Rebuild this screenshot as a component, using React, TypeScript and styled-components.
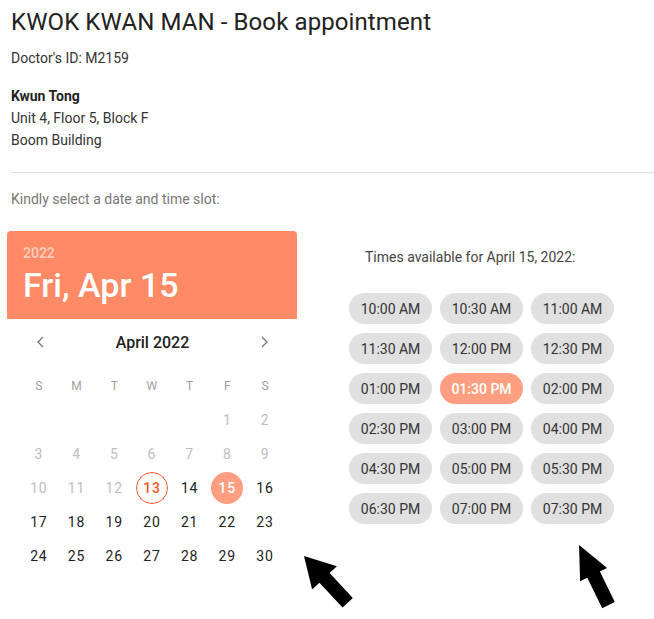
import React, { useState } from 'react';
import styled, { createGlobalStyle } from 'styled-components';

const accent = '#ff8a65';
const accentLight = '#ff9e80';
const accentDark = '#ff5722';

const GlobalStyle = createGlobalStyle`
  html, body {
    margin: 0;
    padding: 0;
    background: #fff;
    font-family: Roboto, "Liberation Sans", Arial, sans-serif;
    color: #333;
  }
`;

const weekdays = ['S', 'M', 'T', 'W', 'T', 'F', 'S'];
const slots = [
  '10:00 AM', '10:30 AM', '11:00 AM',
  '11:30 AM', '12:00 PM', '12:30 PM',
  '01:00 PM', '01:30 PM', '02:00 PM',
  '02:30 PM', '03:00 PM', '04:00 PM',
  '04:30 PM', '05:00 PM', '05:30 PM',
  '06:30 PM', '07:00 PM', '07:30 PM',
];

// April 2022 starts on a Friday
const firstWeekday = 5;
const daysInMonth = 30;
const today = 13;

export default function App() {
  const [selectedDay, setSelectedDay] = useState(15);
  const [selectedSlot, setSelectedSlot] = useState('01:30 PM');

  const cells: (number | null)[] = [];
  for (let i = 0; i < firstWeekday; i++) cells.push(null);
  for (let d = 1; d <= daysInMonth; d++) cells.push(d);

  return (
    <Page>
      <GlobalStyle />
      <Heading>KWOK KWAN MAN - Book appointment</Heading>
      <Line>Doctor's ID: M2159</Line>
      <Address>
        <strong>Kwun Tong</strong>
        <span>Unit 4, Floor 5, Block F</span>
        <span>Boom Building</span>
      </Address>
      <Divider />
      <Hint>Kindly select a date and time slot:</Hint>

      <Booking>
        <Calendar>
          <CalendarHeader>
            <Year>2022</Year>
            <BigDate>Fri, Apr {selectedDay}</BigDate>
          </CalendarHeader>
          <MonthRow>
            <NavButton aria-label="previous month">
              <svg width="16" height="16" viewBox="0 0 16 16">
                <path d="M10 3 5 8l5 5" fill="none" stroke="currentColor" strokeWidth="1.3" />
              </svg>
            </NavButton>
            <MonthLabel>April 2022</MonthLabel>
            <NavButton aria-label="next month">
              <svg width="16" height="16" viewBox="0 0 16 16">
                <path d="M6 3l5 5-5 5" fill="none" stroke="currentColor" strokeWidth="1.3" />
              </svg>
            </NavButton>
          </MonthRow>
          <WeekdayRow>
            {weekdays.map((w, i) => (
              <Weekday key={i}>{w}</Weekday>
            ))}
          </WeekdayRow>
          <DayGrid>
            {cells.map((d, i) =>
              d === null ? (
                <DayCell key={i} />
              ) : (
                <DayCell key={i}>
                  <Day
                    $disabled={d < today}
                    $today={d === today && d !== selectedDay}
                    $selected={d === selectedDay}
                    onClick={() => d >= today && setSelectedDay(d)}
                  >
                    {d}
                  </Day>
                </DayCell>
              )
            )}
          </DayGrid>
        </Calendar>

        <Times>
          <TimesTitle>Times available for April {selectedDay}, 2022:</TimesTitle>
          <SlotGrid>
            {slots.map((s) => (
              <Slot key={s} $selected={s === selectedSlot} onClick={() => setSelectedSlot(s)}>
                {s}
              </Slot>
            ))}
          </SlotGrid>
        </Times>
      </Booking>

      <Arrow $left={300} $top={552} width="60" height="60" viewBox="0 0 60 60">
        <polygon points="4,4 36.9,14.3 29.6,21.1 52.8,45.9 42.6,55.5 19.4,30.7 12.1,37.5" />
      </Arrow>
      <Arrow $left={575} $top={541} width="45" height="72" viewBox="0 0 45 72">
        <polygon points="4,4 32.1,27 24.9,30.5 39.8,61.1 27.2,67.3 12.3,36.7 5.1,40.2" />
      </Arrow>
    </Page>
  );
}

const Page = styled.div`
  position: relative;
  width: 654px;
  height: 619px;
  box-sizing: border-box;
  padding: 8px 0 0 11px;
  overflow: hidden;
`;

const Heading = styled.h1`
  margin: 0;
  font-size: 24px;
  line-height: 28px;
  font-weight: 400;
  letter-spacing: 0.1px;
  color: #222;
`;

const Line = styled.p`
  margin: 11px 0 0;
  font-size: 14px;
  line-height: 22px;
  color: #333;
`;

const Address = styled.div`
  margin-top: 16px;
  display: flex;
  flex-direction: column;
  font-size: 14px;
  line-height: 22px;
  color: #333;
  strong {
    font-weight: 700;
    color: #222;
  }
`;

const Divider = styled.hr`
  margin: 21px 0 0;
  border: none;
  border-top: 1px solid #e0e0e0;
`;

const Hint = styled.p`
  margin: 15px 0 0;
  font-size: 14px;
  line-height: 22px;
  color: #777;
`;

const Booking = styled.div`
  display: flex;
  align-items: flex-start;
  margin: 21px 0 0 -4px;
`;

const Calendar = styled.div`
  width: 290px;
  flex-shrink: 0;
`;

const CalendarHeader = styled.div`
  background: ${accent};
  border-radius: 4px 4px 0 0;
  padding: 12px 16px 12px;
  color: #fff;
`;

const Year = styled.div`
  font-size: 14px;
  line-height: 20px;
  font-weight: 500;
  color: rgba(255, 255, 255, 0.6);
`;

const BigDate = styled.div`
  font-size: 34px;
  line-height: 44px;
  font-weight: 500;
`;

const MonthRow = styled.div`
  height: 46px;
  display: flex;
  align-items: center;
  justify-content: space-between;
  padding: 0 25px 0 26px;
`;

const NavButton = styled.button`
  border: none;
  background: transparent;
  padding: 0;
  width: 16px;
  height: 16px;
  color: #757575;
  display: flex;
  cursor: pointer;
`;

const MonthLabel = styled.div`
  font-size: 16px;
  font-weight: 500;
  color: #222;
`;

const WeekdayRow = styled.div`
  display: grid;
  grid-template-columns: repeat(7, 37.7px);
  padding: 8px 0 0 13px;
  height: 26px;
  align-items: center;
`;

const Weekday = styled.span`
  text-align: center;
  font-size: 12px;
  color: #9e9e9e;
`;

const DayGrid = styled.div`
  display: grid;
  grid-template-columns: repeat(7, 37.7px);
  grid-auto-rows: 34px;
  padding: 4px 0 0 13px;
`;

const DayCell = styled.div`
  display: flex;
  align-items: center;
  justify-content: center;
`;

const Day = styled.span<{ $disabled?: boolean; $today?: boolean; $selected?: boolean }>`
  width: 32px;
  height: 32px;
  box-sizing: border-box;
  border-radius: 50%;
  display: flex;
  align-items: center;
  justify-content: center;
  font-size: 14px;
  font-weight: ${(p) => (p.$selected || p.$today ? 500 : 400)};
  letter-spacing: 0.8px;
  cursor: ${(p) => (p.$disabled ? 'default' : 'pointer')};
  color: ${(p) =>
    p.$selected ? '#fff' : p.$today ? accentDark : p.$disabled ? '#bdbdbd' : '#222'};
  background: ${(p) => (p.$selected ? accentLight : 'transparent')};
  border: ${(p) => (p.$today ? `1px solid ${accentDark}` : 'none')};
`;

const Times = styled.div`
  margin-left: 52px;
  padding-top: 16px;
`;

const TimesTitle = styled.div`
  margin-left: 16px;
  font-size: 14px;
  line-height: 20px;
  color: #444;
`;

const SlotGrid = styled.div`
  margin-top: 26px;
  display: grid;
  grid-template-columns: repeat(3, 83px);
  grid-auto-rows: 31px;
  gap: 9px 8px;
`;

const Slot = styled.button<{ $selected?: boolean }>`
  border: none;
  border-radius: 16px;
  padding: 0;
  font-family: inherit;
  font-size: 14px;
  font-weight: ${(p) => (p.$selected ? 500 : 400)};
  color: ${(p) => (p.$selected ? '#fff' : '#333')};
  background: ${(p) => (p.$selected ? accentLight : '#e0e0e0')};
  cursor: pointer;
`;

const Arrow = styled.svg<{ $left: number; $top: number }>`
  position: absolute;
  left: ${(p) => p.$left}px;
  top: ${(p) => p.$top}px;
  fill: #000;
`;
